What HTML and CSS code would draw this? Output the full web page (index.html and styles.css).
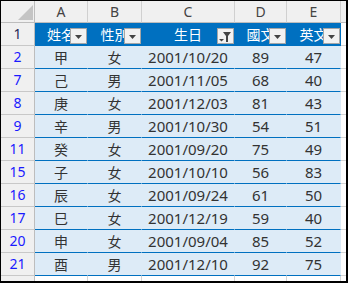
FILE: index.html
```html
<!DOCTYPE html>
<html>
<head>
<meta charset="utf-8">
<link rel="stylesheet" href="styles.css">
</head>
<body>
<div class="sheet">
  <div class="corner"><svg class="tri" width="15" height="15" viewBox="0 0 15 15"><polygon points="15,0 15,15 0,15" fill="#c4c4c4"/></svg></div>
  <div class="col">A</div><div class="col">B</div><div class="col">C</div><div class="col">D</div><div class="col">E</div><div class="col x"></div>

  <div class="rh first">1</div>
  <div class="th">姓名<span class="btn"><svg width="7" height="4" viewBox="0 0 7 4"><polygon points="0,0 7,0 3.5,4" fill="#444"/></svg></span></div>
  <div class="th">性別<span class="btn"><svg width="7" height="4" viewBox="0 0 7 4"><polygon points="0,0 7,0 3.5,4" fill="#444"/></svg></span></div>
  <div class="th">生日<span class="btn"><svg width="13" height="10" viewBox="0 0 13 10"><polygon points="4,0 12,0 9,4 9,10 7,10 7,4" fill="#444"/><polygon points="0,7 5,7 2.5,9.5" fill="#444"/></svg></span></div>
  <div class="th">國文<span class="btn"><svg width="7" height="4" viewBox="0 0 7 4"><polygon points="0,0 7,0 3.5,4" fill="#444"/></svg></span></div>
  <div class="th">英文<span class="btn"><svg width="7" height="4" viewBox="0 0 7 4"><polygon points="0,0 7,0 3.5,4" fill="#444"/></svg></span></div>
  <div class="tx x"></div>

  <div class="rh">2</div><div class="td cj">甲</div><div class="td cj">女</div><div class="td">2001/10/20</div><div class="td">89</div><div class="td">47</div><div class="tx x"></div>
  <div class="rh">7</div><div class="td cj">己</div><div class="td cj">男</div><div class="td">2001/11/05</div><div class="td">68</div><div class="td">40</div><div class="tx x"></div>
  <div class="rh">8</div><div class="td cj">庚</div><div class="td cj">女</div><div class="td">2001/12/03</div><div class="td">81</div><div class="td">43</div><div class="tx x"></div>
  <div class="rh">9</div><div class="td cj">辛</div><div class="td cj">男</div><div class="td">2001/10/30</div><div class="td">54</div><div class="td">51</div><div class="tx x"></div>
  <div class="rh">11</div><div class="td cj">癸</div><div class="td cj">女</div><div class="td">2001/09/20</div><div class="td">75</div><div class="td">49</div><div class="tx x"></div>
  <div class="rh">15</div><div class="td cj">子</div><div class="td cj">女</div><div class="td">2001/10/10</div><div class="td">56</div><div class="td">83</div><div class="tx x"></div>
  <div class="rh">16</div><div class="td cj">辰</div><div class="td cj">女</div><div class="td">2001/09/24</div><div class="td">61</div><div class="td">50</div><div class="tx x"></div>
  <div class="rh">17</div><div class="td cj">巳</div><div class="td cj">女</div><div class="td">2001/12/19</div><div class="td">59</div><div class="td">40</div><div class="tx x"></div>
  <div class="rh">20</div><div class="td cj">申</div><div class="td cj">女</div><div class="td">2001/09/04</div><div class="td">85</div><div class="td">52</div><div class="tx x"></div>
  <div class="rh">21</div><div class="td cj">酉</div><div class="td cj">男</div><div class="td">2001/12/10</div><div class="td">92</div><div class="td">75</div><div class="tx x"></div>

  <div class="rh b"></div><div class="tx b"></div><div class="tx b"></div><div class="tx b"></div><div class="tx b"></div><div class="tx b"></div><div class="tx b x"></div>
</div>
</body>
</html>
```
FILE: styles.css
```css
html, body {
  margin: 0;
  padding: 0;
}
body {
  width: 348px;
  height: 283px;
  overflow: hidden;
  background: #fff;
}
.sheet {
  box-sizing: border-box;
  width: 348px;
  height: 283px;
  border-style: solid;
  border-color: #000;
  border-width: 1px 2px 2px 1px;
  display: grid;
  grid-template-columns: 34px 53px 54px 93px 52px 54px 1fr;
  grid-template-rows: 22px repeat(11, 23px) 1fr;
  font-family: "Noto Sans", "Noto Sans CJK TC", sans-serif;
  font-size: 15px;
  line-height: 1;
  color: #333;
}
.sheet > div {
  box-sizing: border-box;
  border-right: 1px solid #d4d4d4;
  border-bottom: 1px solid #d4d4d4;
  display: flex;
  align-items: center;
  justify-content: center;
  position: relative;
  overflow: hidden;
  white-space: nowrap;
}
.sheet > div.x {
  border-right: none;
}
.sheet > div.b {
  border-bottom: none;
}
.corner {
  background: #f0f0f0;
  border-right-color: #bdbdbd !important;
  border-bottom-color: #bdbdbd !important;
}
.tri {
  position: absolute;
  right: 1px;
  bottom: 2px;
}
.col {
  background: #f0f0f0;
  color: #444;
  font-size: 14px;
  border-right-color: #d0d0d0 !important;
  border-bottom-color: #bdbdbd !important;
}
.rh {
  background: #f0f0f0;
  color: #1a1aff;
  font-size: 14px;
  border-right-color: #bdbdbd !important;
  border-bottom-color: #c8c8c8 !important;
}
.rh.first {
  color: #1f2a55;
}
.th {
  background: #0070c0;
  color: #fff;
  font-family: "Noto Sans CJK TC", sans-serif;
  font-size: 14px;
  border-right-color: #0070c0 !important;
  border-bottom-color: #0070c0 !important;
}
.btn {
  position: absolute;
  right: 0;
  bottom: 1px;
  width: 17px;
  height: 16px;
  box-sizing: border-box;
  background: #f2f2f2;
  border: 1px solid #a6a6a6;
  display: flex;
  align-items: center;
  justify-content: center;
  padding-top: 2px;
}
.td {
  background: #ddebf7;
  border-right-color: #ddebf7 !important;
  border-bottom-color: #0070c0 !important;
}
.td.cj {
  font-family: "Noto Sans CJK TC", sans-serif;
  font-size: 14px;
}
.tx {
  background: #fff;
}
```
